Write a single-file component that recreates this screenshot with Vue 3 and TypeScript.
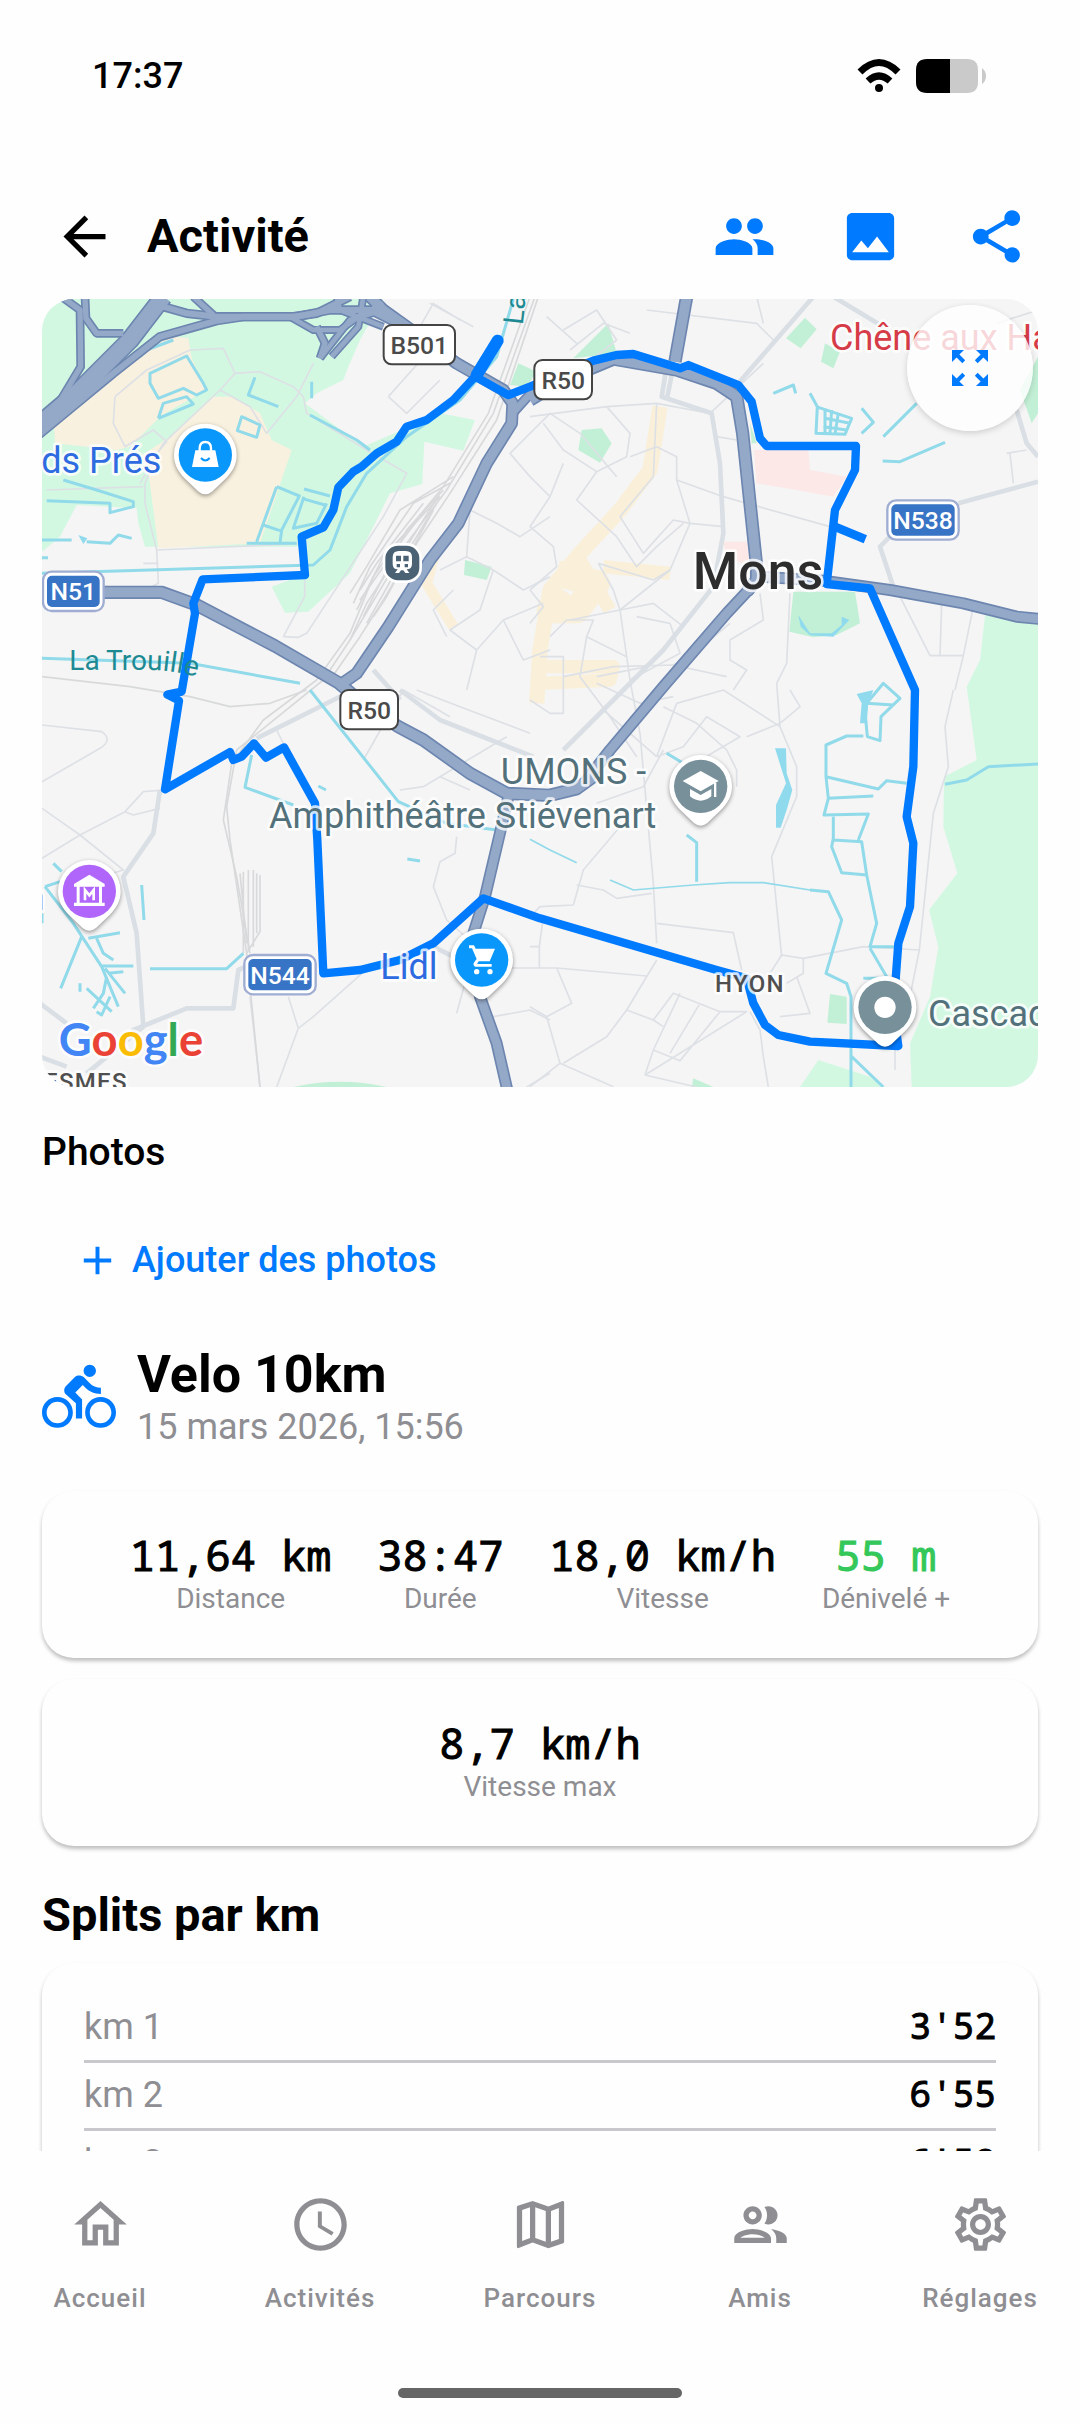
<script setup lang="ts">
interface Stat {
  value: string
  label: string
  positive?: boolean
}

interface Split {
  label: string
  pace: string
}

interface Tab {
  label: string
  icon: string
}

interface Shield {
  text: string
  x: number
  y: number
  width: number
  national?: boolean
}

interface Pin {
  id: string
  x: number
  y: number
  color: string
}

const stats: Stat[] = [
  { value: '11,64 km', label: 'Distance' },
  { value: '38:47', label: 'Durée' },
  { value: '18,0 km/h', label: 'Vitesse' },
  { value: '55 m', label: 'Dénivelé +', positive: true },
]

const splits: Split[] = [
  { label: 'km 1', pace: "3'52" },
  { label: 'km 2', pace: "6'55" },
  { label: 'km 3', pace: "6'58" },
]

const tabs: Tab[] = [
  { label: 'Accueil', icon: 'M12 5.69l5 4.5V18h-2v-6H9v6H7v-7.81l5-4.5M12 3L2 12h3v8h6v-6h2v6h6v-8h3L12 3z' },
  {
    label: 'Activités',
    icon: 'M11.99 2C6.47 2 2 6.48 2 12s4.47 10 9.99 10C17.52 22 22 17.52 22 12S17.52 2 11.99 2zM12 20c-4.42 0-8-3.58-8-8s3.58-8 8-8 8 3.58 8 8-3.58 8-8 8zm.5-13H11v6l5.25 3.15.75-1.23-4.5-2.67z',
  },
  {
    label: 'Parcours',
    icon: 'M20.5 3l-.16.03L15 5.1 9 3 3.36 4.9c-.21.07-.36.25-.36.48V20.5c0 .28.22.5.5.5l.16-.03L9 18.9l6 2.1 5.64-1.9c.21-.07.36-.25.36-.48V3.5c0-.28-.22-.5-.5-.5zM10 5.47l4 1.4v11.66l-4-1.4V5.47zm-5 .99l3-1.01v11.7l-3 1.16V6.46zm14 11.08l-3 1.01V6.86l3-1.16v11.84z',
  },
  {
    label: 'Amis',
    icon: 'M9 13.75c-2.34 0-7 1.17-7 3.5V19h14v-1.75c0-2.33-4.66-3.5-7-3.5zM4.34 17c.84-.58 2.87-1.25 4.66-1.25s3.82.67 4.66 1.25H4.34zM9 12c1.93 0 3.5-1.57 3.5-3.5S10.93 5 9 5 5.5 6.57 5.5 8.5 7.07 12 9 12zm0-5c.83 0 1.5.67 1.5 1.5S9.83 10 9 10s-1.5-.67-1.5-1.5S8.17 7 9 7zm7.04 6.81c1.16.84 1.96 1.96 1.96 3.44V19h4v-1.75c0-2.02-3.5-3.17-5.96-3.44zM15 12c1.93 0 3.5-1.57 3.5-3.5S16.93 5 15 5c-.54 0-1.04.13-1.5.35.63.89 1 1.98 1 3.15s-.37 2.26-1 3.15c.46.22.96.35 1.5.35z',
  },
  {
    label: 'Réglages',
    icon: 'M19.43 12.98c.04-.32.07-.64.07-.98 0-.34-.03-.66-.07-.98l2.11-1.65c.19-.15.24-.42.12-.64l-2-3.46c-.09-.16-.26-.25-.44-.25-.06 0-.12.01-.17.03l-2.49 1c-.52-.4-1.08-.73-1.69-.98l-.38-2.65C14.46 2.18 14.25 2 14 2h-4c-.25 0-.46.18-.49.42l-.38 2.65c-.61.25-1.17.59-1.69.98l-2.49-1c-.06-.02-.12-.03-.18-.03-.17 0-.34.09-.43.25l-2 3.46c-.13.22-.07.49.12.64l2.11 1.65c-.04.32-.07.65-.07.98 0 .33.03.66.07.98l-2.11 1.65c-.19.15-.24.42-.12.64l2 3.46c.09.16.26.25.44.25.06 0 .12-.01.17-.03l2.49-1c.52.4 1.08.73 1.69.98l.38 2.65c.03.24.24.42.49.42h4c.25 0 .46-.18.49-.42l.38-2.65c.61-.25 1.17-.59 1.69-.98l2.49 1c.06.02.12.03.18.03.17 0 .34-.09.43-.25l2-3.46c.12-.22.07-.49-.12-.64l-2.11-1.65zm-1.98-1.71c.04.31.05.52.05.73 0 .21-.02.43-.05.73l-.14 1.13.89.7 1.08.84-.7 1.21-1.27-.51-1.04-.42-.9.68c-.43.32-.84.56-1.25.73l-1.06.43-.16 1.13-.2 1.35h-1.4l-.19-1.35-.16-1.13-1.06-.43c-.43-.18-.83-.41-1.23-.71l-.91-.7-1.06.43-1.27.51-.7-1.21 1.08-.84.89-.7-.14-1.13c-.03-.31-.05-.54-.05-.74s.02-.43.05-.73l.14-1.13-.89-.7-1.08-.84.7-1.21 1.27.51 1.04.42.9-.68c.43-.32.84-.56 1.25-.73l1.06-.43.16-1.13.2-1.35h1.39l.19 1.35.16 1.13 1.06.43c.43.18.83.41 1.23.71l.91.7 1.06-.43 1.27-.51.7 1.21-1.07.85-.89.7.14 1.13zM12 8c-2.21 0-4 1.79-4 4s1.79 4 4 4 4-1.79 4-4-1.79-4-4-4zm0 6c-1.1 0-2-.9-2-2s.9-2 2-2 2 .9 2 2-.9 2-2 2z',
  },
]

const shields: Shield[] = [
  { text: 'B501', x: 1061, y: 105, width: 214 },
  { text: 'R50', x: 1513, y: 210, width: 173 },
  { text: 'R50', x: 931, y: 1200, width: 173 },
  { text: 'N51', x: 39, y: 845, width: 182, national: true },
  { text: 'N538', x: 2572, y: 631, width: 214, national: true },
  { text: 'N544', x: 643, y: 1995, width: 214, national: true },
]

const pins: Pin[] = [
  { id: 'bag', x: 526, y: 495, color: '#0a97fb' },
  { id: 'museum', x: 178, y: 1804, color: '#b066fa' },
  { id: 'cart', x: 1355, y: 2010, color: '#0a97fb' },
  { id: 'school', x: 2012, y: 1489, color: '#78909a' },
  { id: 'place', x: 2565, y: 2152, color: '#78909a' },
]

// Motorway and ring road geometry, drawn twice: casing first, then fill.
const highways: { d: string; w: number }[] = [
  { d: 'M20 410L150 300L300 150L400 20', w: 50 },
  { d: 'M20 440L250 250L390 140L560 92L640 80H790L860 70L960 20', w: 20 },
  { d: 'M95 20L150 60L152 230L80 350', w: 18 },
  { d: 'M165 20L168 85L200 130H280', w: 18 },
  { d: 'M400 50L470 70L560 80H800L900 60L1020 60L1100 100', w: 20 },
  { d: 'M490 20L550 75', w: 18 },
  { d: 'M780 80L850 120H930L1000 70L1060 40', w: 16 },
  { d: 'M870 205L885 160L860 110', w: 18 },
  { d: 'M905 200L985 110L1000 20', w: 16 },
  { d: 'M870 205L960 90L1060 60', w: 16 },
  { d: 'M920 20L930 60L1060 110', w: 16 },
  { d: 'M1020 20L1060 60L1130 110L1280 220L1420 300L1448 340L1445 400L1370 520L1285 700L1200 810L1075 1010L980 1150L930 1185', w: 30 },
  { d: 'M1448 370L1520 290', w: 22 },
  { d: 'M215 907H395L500 945L735 1068L925 1178L1010 1250L1105 1310L1180 1350L1320 1450L1430 1510L1560 1516L1640 1496L1690 1460', w: 32 },
  { d: 'M1670 1470L1740 1380L1900 1190L2090 970L2160 895', w: 28 },
  { d: 'M1500 330L1600 270L1750 207L1940 240L2060 280L2120 320L2138 430L2160 640L2180 830V870L2150 905', w: 32 },
  { d: 'M1970 20L1935 215', w: 32 },
  { d: 'M2190 860L2380 872L2580 900L2800 940L2960 980L3040 988', w: 28 },
  { d: 'M1440 1500L1412 1620L1365 1820L1330 1930L1350 2120L1400 2260L1432 2400', w: 28 },
]

const streets: string[] = [
  // north-west retail park
  'M255 320L350 240L480 180L580 175L615 250L570 300L400 460L330 580',
  'M255 320L250 400L285 470L370 420L410 455L380 490L345 580V640L380 780L385 880L330 910',
  'M615 250L690 245L790 290L820 320L830 370L1010 480L1130 550L1060 680L830 1030L805 1042L760 1040',
  'M570 300L660 350L710 430L800 320L850 220',
  'M50 600L340 590M380 780L830 760M340 820H385M824 870V920L760 1040',
  // station district
  'M1075 320L1200 180L1290 230M1075 320L1130 370L1230 270M1200 40L1330 110M1170 110L1210 40L1290 90',
  'M1500 430L1440 490L1500 560L1560 620M1500 430L1560 370L1650 430L1760 560M1320 660L1400 700L1470 740L1560 680',
  'M1320 660L1310 800L1390 840L1480 900L1560 860M1390 840L1350 960L1260 1020L1340 1080L1420 990L1540 940',
  'M1340 1080L1310 1200M1420 990L1480 1110L1560 1080M1270 900L1210 960L1250 1040M1230 840L1310 800',
  // old town
  'M1600 120L1700 60L1760 150L1690 205M1620 180L1720 100L1800 130M1550 80L1640 160M1850 60L2180 100L2230 150',
  'M1500 380L1730 350L1880 340L2040 370M1730 350L1800 430L1790 500L1700 545L1600 480L1540 400M1600 520L1560 620L1500 710',
  'M1700 545L1640 630L1760 740L1820 830L1880 770L1960 700M1800 500L1880 470L1940 500L1940 570L2080 620L2400 710',
  'M1880 340L1870 560L1770 680L1840 790L1930 690L1980 700L2080 710M1940 570L1980 700L1920 840L1770 960L1620 990',
  'M1500 710L1570 770L1580 830L1500 900M1500 900L1540 950L1500 1000M1560 1040L1610 990H1690L1670 1040L1790 1100',
  'M1705 820L1870 870L1920 840M1705 820L1750 900L1770 960L1800 1170M1770 960L1870 940L1960 1010L1850 1130L1700 1160',
  'M1530 1100H1600V1270H1560L1500 1230M1600 1160L1750 1130L1930 1125L2090 1160M1670 1040L1650 1160L1740 1280L1820 1400',
  'M1820 980L1920 1000L1950 1090L1800 1170L1830 1330L1870 1780L1880 1960M1930 1125L1980 1100L2100 1000',
  'M2060 440L2120 450M2040 370L2200 220M2180 20L2200 100M2190 910L2200 990L2100 1050V1110L2150 1140L2110 1200',
  // southern suburbs
  'M1880 1400L1940 1240L2080 1200L2250 1310M1880 1400L1960 1370L2030 1280L2130 1340L1960 1440M1700 1540L1840 1490L1900 1380',
  'M2150 1340L2250 1300L2310 1250L2280 1200M2280 910L2270 1120L2240 1180L2250 1310L2300 1430V1520L2225 1700L2240 1850L2255 2000',
  'M1900 1250L2000 1300L2090 1380L2120 1440V1490M1720 1260L1880 1400M1700 1180L1830 1240L1930 1220',
  'M1110 1500L1180 1490L1230 1460L1430 1340M1230 1460L1320 1500M1000 1410L1120 1200L1260 1280M1160 1200L1290 1250L1500 1330',
  'M1280 1640L1275 1690L1230 1715L1210 1790L1250 1890L1340 1970M1500 1880L1530 1850L1630 1845L1660 1740L1770 1610',
  'M1640 1785L1720 1800L1760 1825L1865 1810M1500 1970H1528V2032M1350 2034H1580L1850 2058M1540 1880L1528 1970M1880 1900L2110 1928L2135 2040',
  'M1580 2034L1625 2140L1550 2180L1500 2150M1550 2180L1590 2320L1750 2390M1600 2320L1730 2240L1790 2160L1880 2010',
  'M1590 2320L1500 2390M1790 2160L1870 2190L1930 2110L2070 2165H2150L1845 2355M1870 2190L1900 2210M2070 2165L1950 2312L1870 2280M2010 2140L1920 2290',
  'M1845 2355L1870 2280L1950 2110M2160 2165L2190 2220L2200 2300L2215 2391M1845 2355L2000 2391M2220 2050L2255 1995L2320 2005L2500 1970L2668 1980',
  'M2320 2005V2050L2270 2080M2300 2060L2340 2170L2250 2180M2770 1200L2745 1310L2755 1430L2710 1570L2668 1980L2640 2120M2595 2280V2340',
  // east of the ring road
  'M2600 900L2700 1097H2800L2830 950M2735 940L2730 1097M2800 1097L2775 1200M2940 490L2950 580M2930 490L2990 480M2900 100L3024 60',
  // south-west
  'M36 1305L215 1325Q250 1350 210 1375L36 1475M36 1555L150 1635L36 1705M150 1635L285 1565L340 1505L400 1500M150 1635L280 1740L180 1770L100 1800',
  'M285 1565L310 1575L390 1555M660 2120L690 2391M775 2120L805 2215L850 2180L1030 2020M805 2215L740 2391M1280 2170L1310 2060',
  'M740 1320L760 1360M1390 2180L1500 2160L1560 2190M1490 2391L1560 2350',
]

const mediumRoads: string[] = [
  'M1910 230L1895 320L2045 370L2070 520L2080 730L2050 890L1900 1080L1780 1200L1600 1380',
  'M1930 230L1910 330',
  'M2125 280L2350 20',
  'M680 1345L940 1215M1110 1200L1230 1290L1510 1400',
  'M390 1500L370 1630L280 1760L320 1930L340 2210L310 2220L470 2155H610L625 2040L670 2020',
  'M340 2210L170 2350',
  'M2785 640L3024 575M2580 740L2550 770L2590 890',
  'M2410 20L2560 110M2960 360L2990 460L3024 500',
  'M1210 1970L1270 2000M30 2140L110 2200M30 2300L110 2330',
  'M1030 1140L1110 1230',
]

const rails: string[] = [
  'M1515 20L1390 370L1250 600L1130 760L1010 940L960 1050L880 1170L620 1380L590 1550L600 1650L650 1990L690 2391',
  'M1500 20L1375 370L1240 590L1100 760L1030 860L960 1030L860 1170L700 1290L605 1420L580 1590L620 1760L660 1990',
  'M1525 20L1400 390L1260 610L1160 760L1060 930L990 1040L900 1170',
  'M1270 560L1110 660L1010 830L960 910M1260 580L1150 640L1020 830L970 940M1240 600L1130 720L1040 900L1000 980M1230 610L1080 850L960 1050M1200 640L1110 760L990 930',
  'M1230 620L1060 800L980 960M1220 640L1100 840L1010 1000M1180 640L1040 820L990 900M1210 660L1070 920L1030 980',
  'M36 1160L300 1190L480 1220L600 1250L720 1240L830 1200',
  'M640 1745V1990M655 1740V1980M670 1740V1970M690 1755V1925L650 1990M630 1750L650 1960M680 1750V1930',
]

const canals: string[] = [
  'M36 850L360 840L850 825L900 780L950 650L1010 550L1130 440L1290 330L1400 200L1450 27',
  'M360 250L470 198L520 280L530 300L500 315L460 295L385 325L360 280ZM385 385L400 340L470 320L490 342L385 385',
  'M675 262L655 315L745 350M635 380L690 405L680 442L622 422ZM845 275V325',
  'M840 375L980 450L1020 480M740 590L808 618L755 720L750 758M740 590L680 755M700 705L750 722M650 760H800M822 597L900 618M815 625L885 645M822 620L790 715L860 700L890 640',
  'M50 632L240 640V668L310 650V635L200 600L100 570M36 750H125M170 755L240 760L265 735L305 745M36 803H54',
  'M330 200L350 180L430 150',
  'M36 1105L480 1120L810 1180M840 1200L1105 1535L1250 1600L1400 1620',
  'M665 1395L645 1492L790 1545M865 1488L888 1500M1132 1707L1170 1713',
  'M335 1785L342 1890M360 2036H590L640 1990M70 1720L95 1745M45 1790L130 1900L215 2030L265 2150M45 1790L90 1775M155 1940L92 2095M175 1945L270 1928M200 1945L220 1990L250 2010M215 2028H310M225 2035L285 2110M230 2060L220 2110L190 2155M170 2095L245 2165M200 2165L215 2175L240 2120M235 2050L280 2045M150 2080V2105M36 1870V1900',
  'M2230 310L2290 285L2297 310M2340 310L2362 350L2358 430L2445 433L2465 385L2365 352M2385 355V430M2405 360L2400 430M2425 370L2415 432M2385 385L2460 400M2380 410L2450 420M2495 355L2530 397L2495 430M2660 340L2560 440M2745 457L2610 515L2558 513',
  'M3024 1422L2875 1430L2810 1470L2745 1483M2630 1480L2570 1472L2545 1497L2388 1460V1365L2450 1338H2500M2388 1460L2395 1525L2530 1518M2395 1525L2382 1575L2515 1572L2485 1650M2410 1580V1650L2495 1655L2510 1755L2435 1748L2405 1670L2410 1645M2510 1755L2540 1900L2520 1970H2600M2520 1975L2570 2060M2500 2065H2560',
  'M2500 1210L2512 1340L2550 1352L2553 1280L2610 1225L2560 1180L2510 1240L2590 1245',
  'M1970 1635L2000 1658V1775M1910 1390L1960 1420',
  'M2340 1800L2395 1805L2435 1890L2388 2050L2450 2080L2463 2120V2391M2465 2300L2560 2391',
]

const routeMain =
  'M1335 260L1270 330L1190 390L1130 410L1100 455L1040 490L995 530L970 545L925 592L910 660L880 712L815 740L825 855L518 868L490 940L495 970L455 1205L412 1214L447 1232L405 1498L600 1386L610 1410L635 1400L672 1360L708 1403L762 1372L855 1540L862 1650L880 2050L990 2040L1110 2010L1210 1960L1360 1825L1530 1885L2060 2040L2150 2065L2170 2140L2205 2205L2245 2235L2340 2255L2605 2268L2590 2160L2605 1960L2640 1850L2650 1660L2630 1580L2650 1430L2655 1200L2520 895L2390 882L2415 660L2475 540L2478 468H2210L2190 445L2165 335L2125 285L1975 225L1950 235L1810 192L1760 195L1690 212L1500 290L1435 315L1340 262'
</script>

<template>
  <div class="screen">
    <div class="status-bar">
      <time class="clock">17:37</time>
      <div class="status-icons">
        <svg class="wifi" viewBox="0 0 44 34" aria-label="Wi-Fi">
          <path d="M3 13Q22 -6 41 13" />
          <path d="M11 22Q22 12 33 22" />
          <circle cx="22" cy="29" r="4" />
        </svg>
        <svg class="battery" viewBox="0 0 72 34" aria-label="Batterie">
          <path d="M11 0H34V34H11Q0 34 0 23V11Q0 0 11 0Z" fill="#000" />
          <path d="M34 0H51Q62 0 62 11V23Q62 34 51 34H34Z" fill="#cacaca" />
          <path d="M66 9Q70 12 70 17T66 25Z" fill="#cacaca" />
        </svg>
      </div>
    </div>

    <header class="top-bar">
      <button class="icon-button" type="button" aria-label="Retour">
        <svg viewBox="0 0 24 24"><path d="M20 11H7.83l5.59-5.59L12 4l-8 8 8 8 1.41-1.41L7.83 13H20v-2z" /></svg>
      </button>
      <h1>Activité</h1>
      <button class="icon-button accent" type="button" aria-label="Participants">
        <svg viewBox="0 0 24 24">
          <path d="M16 11c1.66 0 2.99-1.34 2.99-3S17.66 5 16 5s-3 1.34-3 3 1.34 3 3 3zm-8 0c1.66 0 2.99-1.34 2.99-3S9.66 5 8 5 5 6.34 5 8s1.34 3 3 3zm0 2c-2.33 0-7 1.17-7 3.5V19h14v-2.5c0-2.33-4.67-3.5-7-3.5zm8 0c-.29 0-.62.02-.97.05 1.16.84 1.97 1.97 1.97 3.45V19h6v-2.5c0-2.33-4.67-3.5-7-3.5z" />
        </svg>
      </button>
      <button class="icon-button accent" type="button" aria-label="Image">
        <svg viewBox="0 0 24 24">
          <path d="M21 19V5c0-1.1-.9-2-2-2H5c-1.1 0-2 .9-2 2v14c0 1.1.9 2 2 2h14c1.1 0 2-.9 2-2zM8.500 13.500l2.500 3.010L14.500 12l4.500 6H5l3.500-4.500z" />
        </svg>
      </button>
      <button class="icon-button accent" type="button" aria-label="Partager">
        <svg viewBox="0 0 24 24">
          <path d="M18 16.080c-.76 0-1.440.3-1.960.77L8.910 12.700c.05-.23.09-.46.09-.7s-.04-.47-.09-.7l7.050-4.110c.54.5 1.250.81 2.040.81 1.660 0 3-1.340 3-3s-1.340-3-3-3-3 1.340-3 3c0 .24.04.47.09.7L8.040 9.810C7.500 9.310 6.790 9 6 9c-1.660 0-3 1.340-3 3s1.340 3 3 3c.79 0 1.500-.31 2.040-.81l7.120 4.160c-.05.21-.08.43-.08.65 0 1.610 1.310 2.920 2.920 2.920s2.920-1.310 2.920-2.920-1.310-2.920-2.920-2.920z" />
        </svg>
      </button>
    </header>

    <main class="content">
      <section class="map" aria-label="Carte du parcours">
        <svg class="map-canvas" viewBox="36 27 2988 2364" preserveAspectRatio="xMidYMid slice">
          <rect x="36" y="27" width="2988" height="2364" fill="#f5f5f5" />

          <g fill="#d3f8e2">
            <path d="M36 27H1060L990 150L955 230L940 270L860 310L825 340L1000 470L1230 370L1335 390L1300 482L1183 455L1177 582L1080 610L960 850L835 965L765 968L725 890L830 850L820 770H345L325 700L320 655L140 645L90 740L36 785Z" />
            <path d="M2865 975L3024 1000V2391H2645L2640 2260L2700 2120L2725 1970L2697 1860L2782 1750L2740 1610L2742 1460L2840 1410L2810 1190L2850 1110Z" />
            <path d="M2310 2391L2365 2310L2520 2360L2560 2391Z" />
          </g>
          <g fill="#c2f0d6">
            <path d="M1630 205L1735 100L1760 190Z" />
            <path d="M1655 420L1715 415L1745 460L1710 518L1645 480Z" />
            <path d="M2325 83L2360 118L2312 175L2268 145Z" />
            <path d="M2385 160L2430 185L2410 235L2373 215Z" />
            <path d="M2290 905H2475L2490 1000L2420 1035L2350 1042L2278 1025Z" />
            <path d="M1305 810L1385 830L1370 870L1302 855Z" />
            <path d="M1465 220L1520 245L1490 290L1440 285Z" />
            <path d="M2970 300L3024 200V370L3005 400Z" />
            <path d="M2160 400L2180 460H2165Z" />
            <path d="M2400 2112L2450 2120V2202L2392 2198Z" />
            <path d="M790 2391Q930 2360 1070 2391Z" />
            <path d="M1990 2365L2050 2391H1985Z" />
          </g>
          <g fill="#f9f1df">
            <path d="M350 175L430 140L475 145L485 205L530 300L395 375L300 470L260 480L75 460L72 400L180 300Z" />
            <path d="M550 320H610L690 370L725 450L785 480L690 760L385 775L357 560L330 500L420 440Z" />
          </g>
          <g fill="none" stroke="#faf0d9" stroke-linejoin="round">
            <path d="M1890 350L1860 540L1770 660L1650 790L1560 900L1530 1080L1520 1240" stroke-width="46" />
            <path d="M1650 810L1740 960M1720 830L1920 850M1520 1130L1750 1130L1740 1170L1530 1180" stroke-width="40" />
            <path d="M1580 850L1700 880L1640 960L1560 960L1600 900" stroke-width="80" />
            <path d="M1215 790L1190 880L1270 1010" stroke-width="32" />
          </g>
          <g fill="#fce8e6">
            <path d="M2172 480H2335L2340 540L2450 560L2410 620L2300 600L2180 580Z" />
            <path d="M2080 755H2150L2160 830L2090 800Z" />
          </g>

          <g class="line" stroke="#dde0e5" stroke-width="5">
            <path v-for="d in streets" :key="d" :d="d" />
          </g>
          <g class="line" stroke="#d9dfe4" stroke-width="14">
            <path v-for="d in mediumRoads" :key="d" :d="d" />
          </g>
          <g class="line" stroke="#d8d9da" stroke-width="5">
            <path v-for="d in rails" :key="d" :d="d" />
          </g>
          <g class="line" stroke="#90daea" stroke-width="9">
            <path v-for="d in canals" :key="d" :d="d" />
          </g>
          <path d="M1500 1648L1560 1680L1640 1718M1740 1770L1810 1800L1990 1785L2100 1778H2200L2340 1800" fill="none" stroke="#90daea" stroke-width="5" />
          <g fill="#90daee">
            <path d="M2235 1375H2268L2270 1450L2287 1500L2270 1560L2252 1613H2238V1545L2268 1480Z" />
            <path d="M2480 1212L2530 1200L2515 1240L2510 1300H2490L2495 1240Z" />
            <path d="M2305 975L2340 1030H2405L2435 1005V980L2458 990L2410 1040L2340 1036L2312 1010Z" />
            <path d="M145 735L172 745L160 762Z" />
          </g>

          <g class="line" stroke="#6d86b0">
            <path v-for="road in highways" :key="road.d" :d="road.d" :stroke-width="road.w + 8" />
          </g>
          <g class="line" stroke="#94a9c8">
            <path v-for="road in highways" :key="road.d" :d="road.d" :stroke-width="road.w - 2" />
          </g>

          <g fill="none" stroke="#007aff" stroke-linejoin="round">
            <path :d="routeMain" stroke-width="25" />
            <path d="M1403 152L1340 255" stroke-width="36" stroke-linecap="round" />
            <path d="M2415 710L2506 748" stroke-width="26" />
          </g>

          <g v-for="shield in shields" :key="shield.text + shield.x" class="shield">
            <template v-if="shield.national">
              <rect :x="shield.x" :y="shield.y" :width="shield.width" height="118" rx="26" fill="#fff" stroke="#9fadd2" stroke-width="7" />
              <rect :x="shield.x + 12" :y="shield.y + 12" :width="shield.width - 24" height="94" rx="15" fill="#3874c5" />
            </template>
            <rect v-else :x="shield.x" :y="shield.y" :width="shield.width" height="118" rx="24" fill="#fff" stroke="#444" stroke-width="6" />
            <text :x="shield.x + shield.width / 2" :y="shield.y + 86" :fill="shield.national ? '#fff' : '#4a4a4a'">{{ shield.text }}</text>
          </g>

          <g class="label">
            <text x="394" y="550" text-anchor="end" fill="#2f6be0">ds Prés</text>
            <text x="2400" y="180" fill="#d63b48">Chêne aux Ha</text>
            <text x="1849" y="1482" text-anchor="end" fill="#53717b">UMONS -</text>
            <text x="1298" y="1613" text-anchor="middle" fill="#53717b">Amphithéâtre Stiévenart</text>
            <text x="1051" y="2066" fill="#2f6be0">Lidl</text>
            <text x="2694" y="2208" fill="#53717b">Cascade</text>
            <text x="44" y="1860" text-anchor="end" fill="#6a2fc4">n</text>
          </g>
          <path id="river-line" d="M118 1140H370Q430 1142 520 1164" fill="none" />
          <g class="river">
            <text><textPath href="#river-line">La Trouille</textPath></text>
            <text transform="translate(1478 106) rotate(-84)">La</text>
          </g>
          <g class="town">
            <text x="2160" y="2106" text-anchor="middle">HYON</text>
            <text x="42" y="2401">ESMES</text>
          </g>
          <text class="city" x="2184" y="898" text-anchor="middle">Mons</text>

          <g>
            <rect x="1062" y="763" width="110" height="112" rx="42" fill="#4b6275" stroke="#fff" stroke-width="8" />
            <path fill="#fff" fill-rule="evenodd" d="M1107 783H1127Q1146 783 1146 802V822Q1146 838 1130 838L1138 849H1126L1120 841H1113L1107 849H1095L1103 838Q1088 838 1088 822V802Q1088 783 1107 783ZM1098 797V814H1113V797ZM1120 797V814H1136V797ZM1100 822V832H1110V822ZM1124 822V832H1134V822Z" />
          </g>

          <g v-for="pin in pins" :key="pin.id" :transform="`translate(${pin.x} ${pin.y})`">
            <path class="pin-body" d="M-94 0A94 94 0 1 1 94 0C94 30 80 52 60 72L20 110Q0 126 -20 110L-60 72C-80 52 -94 30 -94 0Z" />
            <circle r="80" :fill="pin.color" />
            <g v-if="pin.id === 'bag'">
              <path d="M-30 -14H30L40 36H-40Z" fill="#fff" />
              <path d="M-17 -10V-20Q-17 -39 0 -39T17 -20V-10" fill="none" stroke="#fff" stroke-width="7" />
              <path d="M-13 9Q0 24 13 9" fill="none" :stroke="pin.color" stroke-width="6" />
            </g>
            <g v-else-if="pin.id === 'museum'">
              <path d="M-46 -22L0 -50L46 -22V-14H38V34H46V44H-46V34H-38V-14H-46ZM-29 -14V34H29V-14Z" fill="#fff" fill-rule="evenodd" />
              <path d="M-13 27V-4L0 12L13 -4V27" fill="none" stroke="#fff" stroke-width="8" />
            </g>
            <g v-else-if="pin.id === 'cart'" fill="#fff">
              <path d="M-38 -44H-23L-18 -34H40L24 4H-9L-14 12H30V20H-20Q-28 14 -22 6L-15 -3L-29 -35H-38Z" />
              <circle cx="-15" cy="35" r="8" />
              <circle cx="25" cy="35" r="8" />
            </g>
            <g v-else-if="pin.id === 'school'" fill="#fff">
              <path d="M0 -46L54 -16L0 15L-54 -16Z" />
              <path d="M-32 8L0 26L32 8V30Q0 56 -32 30Z" />
              <path d="M40 -10H47V32H40Z" />
            </g>
            <circle v-else r="32" fill="#fff" />
          </g>

          <text class="brand" x="86" y="2298">
            <tspan fill="#4285f4">G</tspan><tspan fill="#ea4335">o</tspan><tspan fill="#fbbc04">o</tspan><tspan fill="#4285f4">g</tspan><tspan fill="#34a853">l</tspan><tspan fill="#ea4335">e</tspan>
          </text>
        </svg>
        <button class="expand" type="button" aria-label="Plein écran">
          <svg viewBox="0 0 24 24">
            <path d="M15 3l2.300 2.300-2.890 2.870 1.420 1.420L18.700 6.700 21 9V3zM3 9l2.300-2.300 2.870 2.890 1.420-1.420L6.700 5.300 9 3H3zm6 12l-2.300-2.300 2.890-2.870-1.420-1.420L5.300 17.300 3 15v6zm12-6l-2.300 2.300-2.870-2.890-1.420 1.420 2.890 2.870L15 21h6z" />
          </svg>
        </button>
      </section>

      <h2 class="photos-title">Photos</h2>
      <button class="add-photos" type="button">
        <svg viewBox="0 0 24 24"><path d="M19 13h-6v6h-2v-6H5v-2h6V5h2v6h6v2z" /></svg>
        <span>Ajouter des photos</span>
      </button>

      <section class="activity">
        <svg viewBox="0 0 24 24">
          <path d="M15.500 5.500c1.100 0 2-.9 2-2s-.9-2-2-2-2 .9-2 2 .9 2 2 2zM5 12c-2.800 0-5 2.200-5 5s2.200 5 5 5 5-2.200 5-5-2.200-5-5-5zm0 8.500c-1.900 0-3.500-1.600-3.500-3.500s1.600-3.500 3.500-3.500 3.500 1.600 3.500 3.500-1.600 3.500-3.500 3.500zm5.800-10l2.400-2.400.8.8c1.300 1.300 3 2.100 5.100 2.100V9c-1.500 0-2.700-.6-3.600-1.500l-1.900-1.900c-.5-.4-1-.6-1.600-.6s-1.100.2-1.400.6L7.800 8.400c-.4.4-.6.9-.6 1.400 0 .6.2 1.100.6 1.400L11 14v5h2v-6.200l-2.200-2.300zM19 12c-2.800 0-5 2.200-5 5s2.200 5 5 5 5-2.200 5-5-2.200-5-5-5zm0 8.500c-1.900 0-3.500-1.600-3.500-3.500s1.600-3.500 3.500-3.500 3.500 1.600 3.500 3.500-1.600 3.500-3.500 3.500z" />
        </svg>
        <div>
          <h2>Velo 10km</h2>
          <p>15 mars 2026, 15:56</p>
        </div>
      </section>

      <dl class="card stats">
        <div v-for="stat in stats" :key="stat.label" class="stat">
          <dt>{{ stat.label }}</dt>
          <dd :class="{ positive: stat.positive }">{{ stat.value }}</dd>
        </div>
      </dl>
      <dl class="card stats">
        <div class="stat">
          <dt>Vitesse max</dt>
          <dd>8,7 km/h</dd>
        </div>
      </dl>

      <h2 id="splits-title" class="splits-title">Splits par km</h2>
      <div class="card splits">
        <table aria-labelledby="splits-title">
          <tbody>
            <tr v-for="split in splits" :key="split.label">
              <th scope="row">{{ split.label }}</th>
              <td>{{ split.pace }}</td>
            </tr>
          </tbody>
        </table>
      </div>
    </main>

    <nav class="tab-bar" aria-label="Navigation principale">
      <div class="tabs">
        <a v-for="tab in tabs" :key="tab.label" href="#">
          <svg viewBox="0 0 24 24"><path :d="tab.icon" /></svg>
          <span>{{ tab.label }}</span>
        </a>
      </div>
      <div class="home-indicator"></div>
    </nav>
  </div>
</template>

<style>
body {
  margin: 0;
  background: #fefefe;
}
</style>

<style scoped>
.screen {
  display: flex;
  flex-direction: column;
  height: 100vh;
  overflow: hidden;
  background: #fefefe;
  color: #000;
  font-family: Roboto, 'Liberation Sans', sans-serif;
}

h1,
h2,
p,
dl,
dd {
  margin: 0;
}

button {
  padding: 0;
  border: 0;
  background: none;
  color: inherit;
  font: inherit;
  cursor: pointer;
}

svg {
  display: block;
  flex: none;
  fill: currentColor;
}

/* Status bar */
.status-bar {
  display: flex;
  align-items: center;
  justify-content: space-between;
  height: 152px;
  padding: 0 92px;
  flex: none;
}

.clock {
  font-size: 36px;
  font-weight: 500;
}

.status-icons {
  display: flex;
  align-items: center;
  gap: 15px;
}

.wifi {
  width: 44px;
  height: 34px;
}

.wifi path {
  fill: none;
  stroke: #000;
  stroke-width: 7px;
}

.battery {
  width: 72px;
  height: 34px;
}

/* Header */
.top-bar {
  display: flex;
  align-items: center;
  padding: 21px 21px 0;
  flex: none;
}

.top-bar h1 {
  flex: 1;
  font-size: 47px;
  font-weight: 700;
  line-height: 54px;
}

.icon-button {
  display: grid;
  place-items: center;
  width: 126px;
  height: 126px;
}

.icon-button svg {
  width: 63px;
  height: 63px;
}

.accent {
  color: #007aff;
}

/* Scrolling content */
.content {
  flex: 1;
  min-height: 0;
  padding: 0 42px;
  overflow-y: auto;
  scrollbar-width: none;
}

.map {
  position: relative;
  height: 788px;
  border-radius: 32px;
  overflow: hidden;
}

.map-canvas {
  width: 100%;
  height: 100%;
}

.line {
  fill: none;
  stroke-linejoin: round;
}

.label text,
.river text,
.town text,
.city,
.brand {
  paint-order: stroke;
  stroke: rgba(255, 255, 255, 0.8);
  stroke-width: 16px;
  stroke-linejoin: round;
}

.label text {
  font-size: 108px;
}

.river text {
  font-size: 84px;
  fill: #1d8a93;
  stroke: none;
}

.town text {
  font-size: 72px;
  font-weight: 500;
  letter-spacing: 4px;
  fill: #4f4f4f;
}

.city {
  font-size: 156px;
  font-weight: 500;
  fill: #2d2d2d;
}

.brand {
  font-family: Lato, sans-serif;
  font-size: 136px;
  font-weight: 700;
}

.shield text {
  font-size: 74px;
  font-weight: 500;
  text-anchor: middle;
}

.pin-body {
  fill: #fff;
  filter: drop-shadow(0 5px 6px rgba(0, 0, 0, 0.4));
}

.expand {
  position: absolute;
  top: 6px;
  right: 5px;
  display: grid;
  place-items: center;
  width: 126px;
  height: 126px;
  border-radius: 50%;
  background: rgba(255, 255, 255, 0.8);
  box-shadow: 0 2px 6px rgba(0, 0, 0, 0.16);
  color: #007aff;
}

.expand svg {
  width: 48px;
  height: 48px;
}

.photos-title {
  margin-top: 44px;
  font-size: 39px;
  font-weight: 500;
  line-height: 43px;
}

.add-photos {
  display: flex;
  align-items: center;
  gap: 11px;
  height: 105px;
  margin-top: 34px;
  padding: 0 32px;
  color: #007aff;
  font-size: 36px;
  font-weight: 500;
  line-height: 43px;
}

.add-photos svg {
  width: 47px;
  height: 47px;
}

.activity {
  display: flex;
  align-items: center;
  gap: 21px;
  margin-top: 31px;
}

.activity svg {
  width: 74px;
  height: 74px;
  color: #007aff;
}

.activity h2 {
  font-size: 52px;
  font-weight: 700;
  line-height: 62px;
}

.activity p {
  color: #8e8e93;
  font-size: 36px;
  line-height: 43px;
}

.card {
  margin-top: 21px;
  border-radius: 32px;
  background: #fefefe;
  box-shadow: 0 3px 4px rgba(0, 0, 0, 0.22), 0 3px 3px rgba(0, 0, 0, 0.04);
}

.activity + .card {
  margin-top: 42px;
}

.stats {
  display: flex;
  justify-content: space-evenly;
  padding: 42px;
}

.stat {
  display: flex;
  flex-direction: column-reverse;
  align-items: center;
  gap: 6px;
}

.stat dt {
  color: #8e8e93;
  font-size: 28px;
  line-height: 34px;
}

.stat dd {
  font-family: 'Droid Sans Mono', 'Noto Sans Mono', 'DejaVu Sans Mono', monospace;
  font-size: 42px;
  line-height: 43px;
  -webkit-text-stroke: 1px currentColor;
}

.stat .positive {
  color: #34c759;
}

.splits-title {
  margin-top: 42px;
  font-size: 47px;
  font-weight: 700;
  line-height: 54px;
}

.splits {
  padding: 32px 42px;
}

table {
  width: 100%;
  border-collapse: collapse;
}

th,
td {
  padding: 11px 0;
  border-bottom: 3px solid #c7c7cc;
  font-size: 36px;
  line-height: 43px;
  vertical-align: top;
}

th {
  color: #8e8e93;
  font-weight: 400;
  text-align: left;
}

td {
  font-family: 'Droid Sans Mono', 'Noto Sans Mono', 'DejaVu Sans Mono', monospace;
  line-height: 39px;
  text-align: right;
  -webkit-text-stroke: 1px currentColor;
}

/* Bottom navigation */
.tab-bar {
  display: flex;
  flex-direction: column;
  align-items: center;
  flex: none;
  padding: 42px 0 26px;
  background: #fefefe;
}

.tabs {
  display: flex;
  gap: 20px;
  width: 100%;
}

.tabs a {
  display: flex;
  flex: 1;
  flex-direction: column;
  align-items: center;
  gap: 26px;
  color: #8e8e93;
  font-size: 26px;
  font-weight: 500;
  line-height: 32px;
  letter-spacing: 1px;
  text-decoration: none;
}

.tabs svg {
  width: 63px;
  height: 63px;
}

.home-indicator {
  width: 284px;
  height: 10px;
  margin-top: 74px;
  border-radius: 5px;
  background: #666;
}
</style>
